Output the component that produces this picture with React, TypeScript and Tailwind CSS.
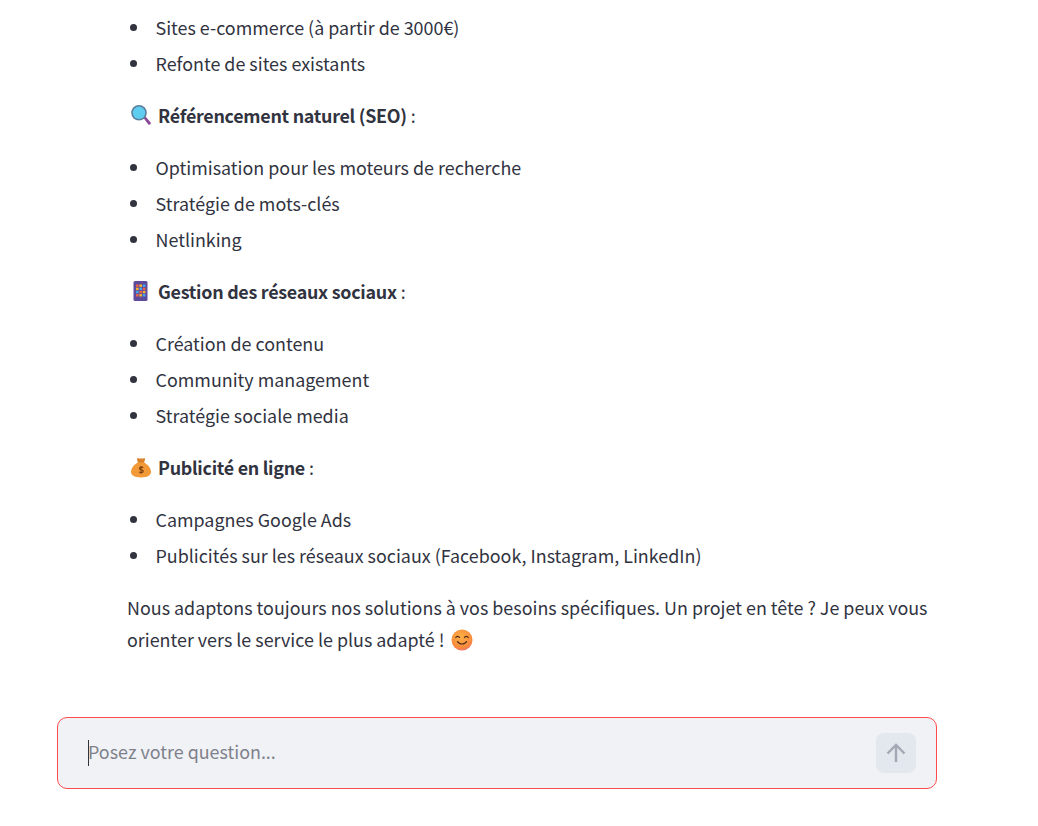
function Bullets({ items }: { items: string[] }) {
  return (
    <ul className="pl-[3px] flex flex-col gap-[4px]">
      {items.map((t) => (
        <li key={t} className="h-[32px] leading-[32px] flex items-center">
          <span className="w-[7px] h-[7px] rounded-full bg-[#31333f] mr-[18.5px] shrink-0" />
          {t}
        </li>
      ))}
    </ul>
  );
}

function SearchIcon() {
  return (
    <svg width="22" height="22" viewBox="0 0 22 22" className="shrink-0">
      <path d="M13.5 14l2-1.6 5.2 6a1.6 1.6 0 0 1-2.4 2z" fill="#8a4a95" />
      <circle cx="9" cy="8.8" r="7.8" fill="#5a7f9c" />
      <circle cx="9" cy="8.8" r="6.2" fill="#5fcdf0" />
    </svg>
  );
}

function PhoneIcon() {
  const colors = ["#f0623f", "#f8b62d", "#3fa9f5", "#f8b62d", "#3fa9f5", "#f0623f", "#3fa9f5", "#f0623f", "#f8b62d", "#f0623f", "#f8b62d", "#3fa9f5"];
  return (
    <svg width="22" height="22" viewBox="0 0 22 22" className="shrink-0">
      <rect x="3.5" y="1" width="14" height="20" rx="1.5" fill="#5f4b9b" />
      {colors.map((c, i) => (
        <rect key={i} x={6 + (i % 3) * 3.4} y={4.5 + Math.floor(i / 3) * 3.2} width="2.6" height="2.4" fill={c} />
      ))}
    </svg>
  );
}

function BagIcon() {
  return (
    <svg width="22" height="22" viewBox="0 0 22 22" className="shrink-0">
      <path d="M8 7L6.800 2.800c1.400-1.200 2.800.3 4.200-.4 1.400.7 2.800-.8 4.200.4L14 7z" fill="#d9822b" />
      <path d="M8 6.500h6c3.700 2 7 5.500 7 9.300 0 4-4 5.700-10 5.700S1 19.800 1 15.800c0-3.800 3.300-7.300 7-9.300z" fill="#f29a38" />
      <path d="M13.300 11.700c-.6-.8-3.800-1-3.800.8 0 1.900 3.800.9 3.800 2.800 0 1.700-3.200 1.600-4 .6M11 10v7.800" fill="none" stroke="#7a3f10" strokeWidth="1.100" />
    </svg>
  );
}

function SmileIcon() {
  return (
    <svg width="22" height="22" viewBox="0 0 22 22" className="shrink-0">
      <defs>
        <radialGradient id="face" cx="45%" cy="35%" r="70%">
          <stop offset="0%" stopColor="#fcb045" />
          <stop offset="75%" stopColor="#f88a3c" />
          <stop offset="100%" stopColor="#ee6f7c" />
        </radialGradient>
      </defs>
      <circle cx="11" cy="11" r="10.500" fill="url(#face)" />
      <path d="M4.800 8.500c.8-1.600 3-1.600 3.800 0M13.400 8.500c.8-1.600 3-1.600 3.800 0M6.500 12.500c1.500 3.300 7.500 3.300 9 0" fill="none" stroke="#4a2d1a" strokeWidth="1.200" strokeLinecap="round" />
    </svg>
  );
}

function Heading({ icon, title }: { icon: React.ReactNode; title: string }) {
  return (
    <p className="h-[32px] leading-[32px] my-[20px] pl-[3px] flex items-center">
      {icon}
      <span className="ml-[6px]"><strong className="font-semibold tracking-[-0.28px]">{title}</strong> :</span>
    </p>
  );
}

export default function App() {
  return (
    <div className="h-[826px] overflow-hidden bg-white text-[#31333f] text-[17.9px] font-['Noto_Sans_CJK_SC',sans-serif]">
      <div className="ml-[127px] w-[810px] pt-[11px] h-[700px] overflow-hidden">
        <Bullets items={["Sites e-commerce (à partir de 3000€)", "Refonte de sites existants"]} />
        <Heading icon={<SearchIcon />} title="Référencement naturel (SEO)" />
        <Bullets items={["Optimisation pour les moteurs de recherche", "Stratégie de mots-clés", "Netlinking"]} />
        <Heading icon={<PhoneIcon />} title="Gestion des réseaux sociaux" />
        <Bullets items={["Création de contenu", "Community management", "Stratégie sociale media"]} />
        <Heading icon={<BagIcon />} title="Publicité en ligne" />
        <Bullets items={["Campagnes Google Ads", "Publicités sur les réseaux sociaux (Facebook, Instagram, LinkedIn)"]} />
        <p className="mt-[20px] leading-[32px]">
          Nous adaptons toujours nos solutions à vos besoins spécifiques. Un projet en tête ? Je peux vous orienter vers le service le plus adapté !{" "}
          <span className="inline-block align-[-4px] ml-[3px]"><SmileIcon /></span>
        </p>
      </div>
      <div className="ml-[57px] mt-[17px] w-[880px] h-[72px] rounded-[10px] border border-[#ff4b4b] bg-[#f0f2f6] flex items-center pl-[30px] pr-[20px]">
        <div className="flex-1 border-l border-[#31333f] h-[26px]">
          <div className="text-[#7e818b] leading-[22px] -ml-[1px]">Posez votre question...</div>
        </div>
        <button className="w-[40px] h-[40px] rounded-[8px] bg-[#e3e7ee] flex items-center justify-center">
          <svg width="24" height="24" viewBox="0 0 24 24" fill="none" stroke="#a3a8b4" strokeWidth="2.4">
            <path d="M12 21V4M3.500 12.500L12 4l8.500 8.500" />
          </svg>
        </button>
      </div>
    </div>
  );
}
